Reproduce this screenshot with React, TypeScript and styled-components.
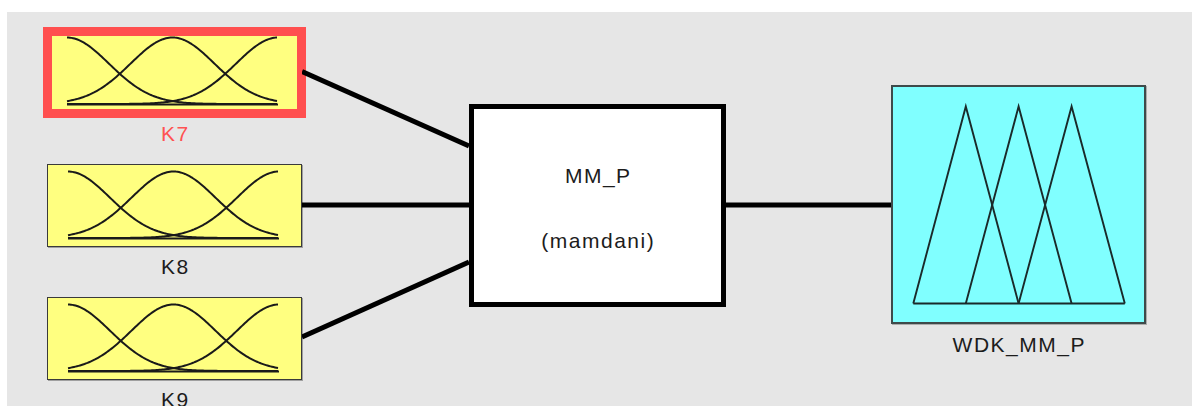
import styled, { createGlobalStyle, css } from 'styled-components';

const GlobalStyle = createGlobalStyle`
	html, body {
		margin: 0;
		padding: 0;
		background: #ffffff;
	}
	body {
		font-family: "Liberation Sans", Arial, sans-serif;
		color: #1c1c1c;
	}
`;

// fuzzy input variables, listed top to bottom
const inputs: { name: string; selected?: boolean }[] = [
	{ name: 'K7', selected: true },
	{ name: 'K8' },
	{ name: 'K9' },
];

const MF_W = 253;
const MF_H = 81;

// bell shaped membership function drawn as a polyline
const gaussPoints = (mu: number, sigma: number) => {
	const x0 = 20, x1 = 231, top = 6.5, bottom = 73;
	const pts: string[] = [];
	for (let x = x0; x <= x1 + 0.01; x += 1.5) {
		const v = Math.exp(-((x - mu) ** 2) / (2 * sigma * sigma));
		pts.push(`${x.toFixed(1)},${(bottom - v * (bottom - top)).toFixed(2)}`);
	}
	return pts.join(' ');
};

const Panel = styled.div`
	box-sizing: border-box;
	margin: 12px 0 0 7px;
	height: 394px;
	padding: 19px 0 0 40px;
	background: #e6e6e6;
	overflow: hidden;
`;

const Diagram = styled.div`
	display: flex;
	align-items: flex-start;
`;

const InputColumn = styled.div`
	display: flex;
	flex-direction: column;
	width: 255px;
	flex: none;
`;

const Node = styled.div`
	display: flex;
	flex-direction: column;
	align-items: stretch;
`;

const MfBox = styled.div<{ $selected?: boolean }>`
	box-sizing: border-box;
	height: 83px;
	background: #ffff80;
	border: 1px solid #3a3a3a;
	box-shadow: 1px 1px 0 rgba(0, 0, 0, 0.3);

	${p => p.$selected && css`
		border: none;
		box-shadow: inset 0 0 0 5px #ff4f4f;
		outline: 4px solid #ff4f4f;
	`}

	svg {
		display: block;
	}
`;

const NodeLabel = styled.div<{ $selected?: boolean }>`
	padding: 8px 0 18px 1.5px;
	text-align: center;
	font-size: 21px;
	line-height: 24px;
	letter-spacing: 1.5px;
	color: ${p => (p.$selected ? '#ff5252' : '#1c1c1c')};
`;

const OutLabel = styled(NodeLabel)`
	padding-top: 9px;
`;

const Wires = styled.svg`
	display: block;
	flex: none;
`;

const RuleBox = styled.div`
	box-sizing: border-box;
	flex: none;
	margin-top: 73px;
	width: 257px;
	height: 203px;
	padding-top: 6px;
	border: 5px solid #000000;
	background: #ffffff;
	display: flex;
	flex-direction: column;
	align-items: center;
	justify-content: center;
	gap: 41px;
`;

const RuleText = styled.div`
	padding-left: 1.5px;
	font-size: 21px;
	line-height: 24px;
	letter-spacing: 1.5px;
`;

const OutputNode = styled.div`
	flex: none;
	width: 255px;
	margin-top: 54px;
	display: flex;
	flex-direction: column;
`;

const OutputBox = styled.div`
	box-sizing: border-box;
	height: 239px;
	background: #80ffff;
	border: 2px solid #3e4a4a;
	box-shadow: 1px 1px 0 rgba(0, 0, 0, 0.25);

	svg {
		display: block;
	}
`;

const MfCurves = () => (
	<svg width={MF_W} height={MF_H} viewBox={`0 0 ${MF_W} ${MF_H}`}>
		<g fill='none' stroke='#1a1a1a' strokeWidth='2' strokeLinejoin='round'>
			<line x1='20' y1='73.5' x2='231' y2='73.5' />
			<polyline points={gaussPoints(20, 42)} />
			<polyline points={gaussPoints(125.5, 42)} />
			<polyline points={gaussPoints(231, 42)} />
		</g>
	</svg>
);

const Triangles = () => {
	const base = 216.5, peak = 19.5;
	const tri = [[20.3, 72.8, 125.6], [72.8, 125.6, 178.6], [125.6, 178.6, 231.8]];
	return <svg width='251' height='235' viewBox='0 0 251 235'>
		<g fill='none' stroke='#1a2a2a' strokeWidth='1.9' strokeLinejoin='miter'>
			<line x1='20.3' y1={base} x2='231.8' y2={base} />
			{ tri.map(([a, b, c], i) =>
				<polyline key={i} points={`${a},${base} ${b},${peak} ${c},${base}`} />
			) }
		</g>
	</svg>;
};

const App = () => {
	return <>
		<GlobalStyle />
		<Panel>
			<Diagram>
				<InputColumn>
					{ inputs.map(inp =>
						<Node key={inp.name}>
							<MfBox $selected={inp.selected}>
								<MfCurves />
							</MfBox>
							<NodeLabel $selected={inp.selected}>{ inp.name }</NodeLabel>
						</Node>
					) }
				</InputColumn>

				<Wires width='167' height='399' viewBox='0 0 167 399'>
					<g stroke='#000' strokeWidth='5'>
						<line x1='0' y1='40.5' x2='167' y2='115' />
						<line x1='0' y1='174' x2='167' y2='174' />
						<line x1='0' y1='306' x2='167' y2='231' />
					</g>
				</Wires>

				<RuleBox>
					<RuleText>MM_P</RuleText>
					<RuleText>(mamdani)</RuleText>
				</RuleBox>

				<Wires width='165' height='200' viewBox='0 0 165 200'>
					<line x1='0' y1='174' x2='165' y2='174' stroke='#000' strokeWidth='5' />
				</Wires>

				<OutputNode>
					<OutputBox>
						<Triangles />
					</OutputBox>
					<OutLabel>WDK_MM_P</OutLabel>
				</OutputNode>
			</Diagram>
		</Panel>
	</>;
};

export default App;
